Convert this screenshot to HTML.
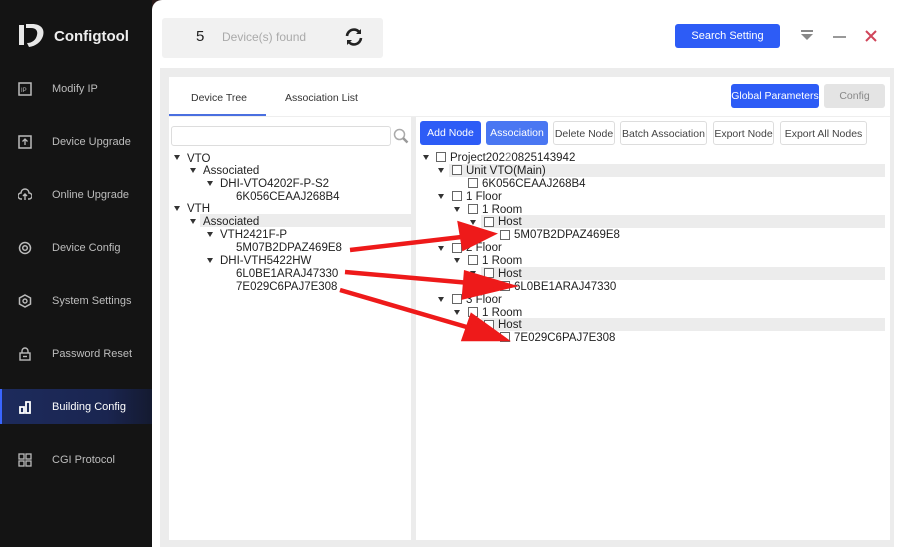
<!DOCTYPE html>
<html><head><meta charset="utf-8"><style>
*{margin:0;padding:0;box-sizing:border-box}
body{width:900px;height:547px;overflow:hidden;background:#2a1a1a;font-family:"Liberation Sans",sans-serif;position:relative}
.a{position:absolute}
#side{left:0;top:0;width:152px;height:547px;background:#141414}
.ni{position:absolute;left:0;width:152px;height:36px;color:#bdbdbd;font-size:11px}
.ni span{position:absolute;left:52px;top:12px}
.ni svg{position:absolute;left:18px;top:11px}
#main{left:152px;top:0;width:748px;height:547px;background:#fff;border-top-left-radius:10px}
.t{position:absolute;font-size:11.5px;color:#222;white-space:nowrap;line-height:13px;margin-top:2px}
.tri{position:absolute;width:0;height:0;border-left:3.5px solid transparent;border-right:3.5px solid transparent;border-top:5px solid #333}
.cb{position:absolute;width:10px;height:10px;border:1px solid #666;background:#fff}
.btn{position:absolute;font-size:10.5px;text-align:center;border-radius:3px;line-height:24px;height:24px}
.ob{border:1px solid #ddd;color:#444;background:#fff}
.hl{position:absolute;background:#ececec;height:13px}
</style></head><body>
<div id="side" class="a">
 <svg class="a" style="left:17px;top:22px" width="30" height="28" viewBox="0 0 30 28"><path d="M2 3h5v20H2z M9 2h6c9 0 13 5 11 12-2 6-7 10-14 11l-2-4c5 0 9-3 10-8 1-4-1-7-6-7H9z" fill="#e8e8e8"/></svg>
 <div class="a" style="left:54px;top:28px;color:#eee;font-size:15px;font-weight:bold">Configtool</div>
 <div class="ni" style="top:71px"><svg width="14" height="14"><rect x="1" y="1" width="12" height="12" fill="none" stroke="#bbb" stroke-width="1.5"/><text x="3" y="10" font-size="6" fill="#bbb">IP</text></svg><span>Modify IP</span></div>
 <div class="ni" style="top:124px"><svg width="14" height="14"><rect x="1" y="1" width="12" height="12" fill="none" stroke="#bbb" stroke-width="1.5"/><path d="M7 4v6M4.5 6.5L7 4l2.5 2.5" stroke="#bbb" fill="none" stroke-width="1.3"/></svg><span>Device Upgrade</span></div>
 <div class="ni" style="top:177px"><svg width="14" height="14"><path d="M4 11H3a3 3 0 0 1 0-6 4 4 0 0 1 8 0 3 3 0 0 1 0 6h-1M7 6v6M5 8l2-2 2 2" stroke="#bbb" fill="none" stroke-width="1.4"/></svg><span>Online Upgrade</span></div>
 <div class="ni" style="top:230px"><svg width="14" height="14"><circle cx="7" cy="7" r="5.5" fill="none" stroke="#bbb" stroke-width="1.5"/><circle cx="7" cy="7" r="2.3" fill="none" stroke="#bbb" stroke-width="1.5"/></svg><span>Device Config</span></div>
 <div class="ni" style="top:283px"><svg width="14" height="14"><path d="M7 1l5.5 3v6L7 13 1.5 10V4z" fill="none" stroke="#bbb" stroke-width="1.5"/><circle cx="7" cy="7" r="2" fill="none" stroke="#bbb" stroke-width="1.4"/></svg><span>System Settings</span></div>
 <div class="ni" style="top:336px"><svg width="14" height="14"><path d="M4 6V4a3 3 0 0 1 6 0v2" stroke="#bbb" fill="none" stroke-width="1.4"/><rect x="2" y="6" width="10" height="7" fill="none" stroke="#bbb" stroke-width="1.4"/><path d="M5 9.5h4" stroke="#bbb" stroke-width="1.4"/></svg><span>Password Reset</span></div>
 <div class="ni" style="top:389px;height:35px;background:linear-gradient(90deg,#1d2b5c,#1a2550 70%,#141a30);border-left:2px solid #3a66ff;color:#fff"><svg width="14" height="14" style="left:16px"><path d="M2 7h4v6H2zM8 2h4v11H8z" fill="none" stroke="#fff" stroke-width="1.8"/></svg><span style="left:50px">Building Config</span></div>
 <div class="ni" style="top:442px"><svg width="14" height="14"><g fill="none" stroke="#bbb" stroke-width="1.3"><rect x="1" y="1" width="5" height="5"/><rect x="8" y="1" width="5" height="5"/><rect x="1" y="8" width="5" height="5"/><rect x="8" y="8" width="5" height="5"/></g></svg><span>CGI Protocol</span></div>
</div>
<div id="main" class="a"></div>
<div class="a" style="left:162px;top:18px;width:221px;height:40px;background:#f1f1f1;border-radius:3px"></div>
<div class="a" style="left:196px;top:28px;font-size:15px;color:#222">5</div>
<div class="a" style="left:222px;top:30px;font-size:12px;color:#aaa">Device(s) found</div>
<svg class="a" style="left:344px;top:27px" width="20" height="20" viewBox="0 0 20 20"><path d="M3 9a7 7 0 0 1 13-3M17 11a7 7 0 0 1-13 3" fill="none" stroke="#222" stroke-width="2.6"/><path d="M17 2v5h-5zM3 18v-5h5z" fill="#222"/></svg>
<div class="btn" style="left:675px;top:24px;width:105px;background:#2d5cf6;color:#fff;font-size:11px">Search Setting</div>
<svg class="a" style="left:800px;top:30px" width="14" height="12"><path d="M1 1h12" stroke="#888" stroke-width="2"/><path d="M1 4h12L7 10z" fill="#888"/></svg>
<div class="a" style="left:833px;top:36px;width:13px;height:2px;background:#999"></div>
<svg class="a" style="left:865px;top:30px" width="12" height="12"><path d="M1 1l10 10M11 1L1 11" stroke="#d0455a" stroke-width="2"/></svg>
<div class="a" style="left:160px;top:68px;width:734px;height:479px;background:#ececec"></div>
<div class="a" style="left:169px;top:77px;width:721px;height:463px;background:#fff"></div>
<div class="a" style="left:191px;top:92px;font-size:10.5px;color:#333">Device Tree</div>
<div class="a" style="left:285px;top:92px;font-size:10.5px;color:#333">Association List</div>
<div class="a" style="left:169px;top:114px;width:97px;height:2px;background:#4a6fe0"></div>
<div class="a" style="left:169px;top:116px;width:721px;height:1px;background:#eee"></div>
<div class="btn" style="left:731px;top:84px;width:88px;background:#2d5cf6;color:#fff">Global Parameters</div>
<div class="btn" style="left:824px;top:84px;width:61px;background:#e4e4e4;color:#888">Config</div>
<div class="a" style="left:411px;top:117px;width:5px;height:423px;background:#ececec"></div>
<div class="a" style="left:171px;top:126px;width:220px;height:20px;border:1px solid #ddd;border-radius:3px"></div>
<svg class="a" style="left:393px;top:128px" width="16" height="16"><circle cx="6.5" cy="6.5" r="5" fill="none" stroke="#aaa" stroke-width="1.5"/><path d="M10 10l4.5 4.5" stroke="#999" stroke-width="2.5"/></svg>
<div class="hl" style="left:200px;top:214px;width:211px"></div>
<div class="tri" style="left:174px;top:155px"></div><div class="t" style="left:187px;top:151px">VTO</div>
<div class="tri" style="left:190px;top:168px"></div><div class="t" style="left:203px;top:163px">Associated</div>
<div class="tri" style="left:207px;top:181px"></div><div class="t" style="left:220px;top:176px">DHI-VTO4202F-P-S2</div>
<div class="t" style="left:236px;top:189px">6K056CEAAJ268B4</div>
<div class="tri" style="left:174px;top:206px"></div><div class="t" style="left:187px;top:201px">VTH</div>
<div class="tri" style="left:190px;top:219px"></div><div class="t" style="left:203px;top:214px">Associated</div>
<div class="tri" style="left:207px;top:232px"></div><div class="t" style="left:220px;top:227px">VTH2421F-P</div>
<div class="t" style="left:236px;top:240px">5M07B2DPAZ469E8</div>
<div class="tri" style="left:207px;top:258px"></div><div class="t" style="left:220px;top:253px">DHI-VTH5422HW</div>
<div class="t" style="left:236px;top:266px">6L0BE1ARAJ47330</div>
<div class="t" style="left:236px;top:279px">7E029C6PAJ7E308</div>
<div class="btn" style="left:420px;top:121px;width:61px;background:#2d5cf6;color:#fff">Add Node</div>
<div class="btn" style="left:486px;top:121px;width:62px;background:#4a77f2;color:#fff">Association</div>
<div class="btn ob" style="left:553px;top:121px;width:62px">Delete Node</div>
<div class="btn ob" style="left:620px;top:121px;width:87px">Batch Association</div>
<div class="btn ob" style="left:713px;top:121px;width:61px">Export Node</div>
<div class="btn ob" style="left:780px;top:121px;width:87px">Export All Nodes</div>
<div class="hl" style="left:449px;top:164px;width:436px"></div>
<div class="hl" style="left:481px;top:215px;width:404px"></div>
<div class="hl" style="left:481px;top:267px;width:404px"></div>
<div class="hl" style="left:481px;top:318px;width:404px"></div>
<div class="tri" style="left:423px;top:155px"></div><div class="cb" style="left:436px;top:152px"></div><div class="t" style="left:450px;top:150px">Project202<span style="color:#777">2</span>0825143942</div>
<div class="tri" style="left:438px;top:168px"></div><div class="cb" style="left:452px;top:165px"></div><div class="t" style="left:466px;top:163px">Unit VTO(Main)</div>
<div class="cb" style="left:468px;top:178px"></div><div class="t" style="left:482px;top:176px">6K056CEAAJ268B4</div>
<div class="tri" style="left:438px;top:194px"></div><div class="cb" style="left:452px;top:191px"></div><div class="t" style="left:466px;top:189px">1 Floor</div>
<div class="tri" style="left:454px;top:207px"></div><div class="cb" style="left:468px;top:204px"></div><div class="t" style="left:482px;top:202px">1 Room</div>
<div class="tri" style="left:470px;top:220px"></div><div class="cb" style="left:484px;top:217px"></div><div class="t" style="left:498px;top:214px">Host</div>
<div class="cb" style="left:500px;top:230px"></div><div class="t" style="left:514px;top:227px">5M07B2DPAZ469E8</div>
<div class="tri" style="left:438px;top:246px"></div><div class="cb" style="left:452px;top:243px"></div><div class="t" style="left:466px;top:240px">2 Floor</div>
<div class="tri" style="left:454px;top:258px"></div><div class="cb" style="left:468px;top:255px"></div><div class="t" style="left:482px;top:253px">1 Room</div>
<div class="tri" style="left:470px;top:271px"></div><div class="cb" style="left:484px;top:268px"></div><div class="t" style="left:498px;top:266px">Host</div>
<div class="cb" style="left:500px;top:281px"></div><div class="t" style="left:514px;top:279px">6L0BE1ARAJ47330</div>
<div class="tri" style="left:438px;top:297px"></div><div class="cb" style="left:452px;top:294px"></div><div class="t" style="left:466px;top:292px">3 Floor</div>
<div class="tri" style="left:454px;top:310px"></div><div class="cb" style="left:468px;top:307px"></div><div class="t" style="left:482px;top:305px">1 Room</div>
<div class="cb" style="left:484px;top:320px"></div><div class="t" style="left:498px;top:317px">Host</div>
<div class="cb" style="left:500px;top:332px"></div><div class="t" style="left:514px;top:330px">7E029C6PAJ7E308</div>
<svg class="a" style="left:0;top:0" width="900" height="547"><g stroke="#ee1a1a" stroke-width="4.5" fill="#ee1a1a">
<path d="M350 250L470 236"/><path d="M492 234L460 224L464 248z"/>
<path d="M345 272L470 283"/><path d="M510 286L466 273L464 297z"/>
<path d="M340 290L470 328"/><path d="M504 339L472 316L464 339z"/>
</g></svg>
</body></html>
